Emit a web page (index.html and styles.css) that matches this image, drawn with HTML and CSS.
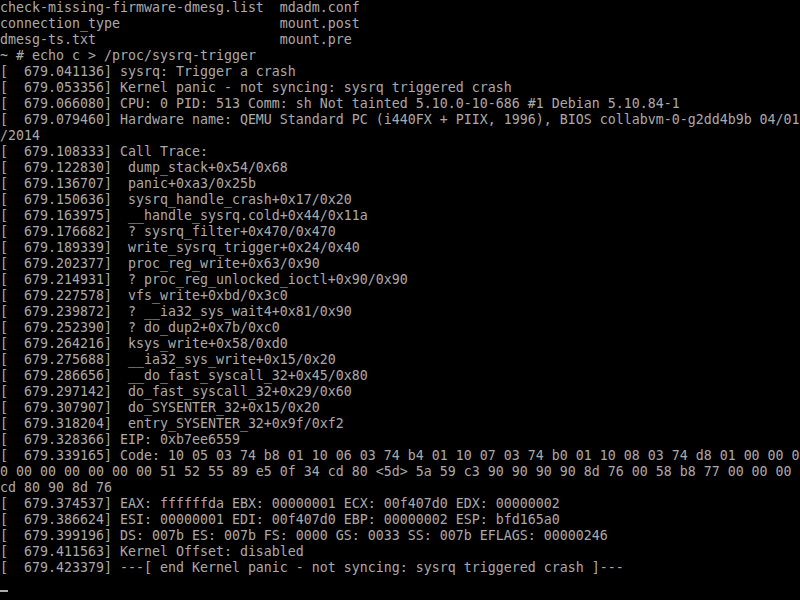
FILE: index.html
```html
<!DOCTYPE html>
<html>
<head>
<meta charset="utf-8">
<link rel="stylesheet" href="styles.css">
</head>
<body>
<pre class="console">check-missing-firmware-dmesg.list  mdadm.conf
connection_type                    mount.post
dmesg-ts.txt                       mount.pre
~ # echo c &gt; /proc/sysrq-trigger
[  679.041136] sysrq: Trigger a crash
[  679.053356] Kernel panic - not syncing: sysrq triggered crash
[  679.066080] CPU: 0 PID: 513 Comm: sh Not tainted 5.10.0-10-686 #1 Debian 5.10.84-1
[  679.079460] Hardware name: QEMU Standard PC (i440FX + PIIX, 1996), BIOS collabvm-0-g2dd4b9b 04/01
/2014
[  679.108333] Call Trace:
[  679.122830]  dump_stack+0x54/0x68
[  679.136707]  panic+0xa3/0x25b
[  679.150636]  sysrq_handle_crash+0x17/0x20
[  679.163975]  __handle_sysrq.cold+0x44/0x11a
[  679.176682]  ? sysrq_filter+0x470/0x470
[  679.189339]  write_sysrq_trigger+0x24/0x40
[  679.202377]  proc_reg_write+0x63/0x90
[  679.214931]  ? proc_reg_unlocked_ioctl+0x90/0x90
[  679.227578]  vfs_write+0xbd/0x3c0
[  679.239872]  ? __ia32_sys_wait4+0x81/0x90
[  679.252390]  ? do_dup2+0x7b/0xc0
[  679.264216]  ksys_write+0x58/0xd0
[  679.275688]  __ia32_sys_write+0x15/0x20
[  679.286656]  __do_fast_syscall_32+0x45/0x80
[  679.297142]  do_fast_syscall_32+0x29/0x60
[  679.307907]  do_SYSENTER_32+0x15/0x20
[  679.318204]  entry_SYSENTER_32+0x9f/0xf2
[  679.328366] EIP: 0xb7ee6559
[  679.339165] Code: 10 05 03 74 b8 01 10 06 03 74 b4 01 10 07 03 74 b0 01 10 08 03 74 d8 01 00 00 0
0 00 00 00 00 00 00 51 52 55 89 e5 0f 34 cd 80 &lt;5d&gt; 5a 59 c3 90 90 90 90 8d 76 00 58 b8 77 00 00 00
cd 80 90 8d 76
[  679.374537] EAX: ffffffda EBX: 00000001 ECX: 00f407d0 EDX: 00000002
[  679.386624] ESI: 00000001 EDI: 00f407d0 EBP: 00000002 ESP: bfd165a0
[  679.399196] DS: 007b ES: 007b FS: 0000 GS: 0033 SS: 007b EFLAGS: 00000246
[  679.411563] Kernel Offset: disabled
[  679.423379] ---[ end Kernel panic - not syncing: sysrq triggered crash ]---
<span class="cursor"></span></pre>
</body>
</html>
```

FILE: styles.css
```css
html, body {
  margin: 0;
  padding: 0;
  background: #000000;
  width: 800px;
  height: 600px;
  overflow: hidden;
}

.console {
  margin: 0;
  padding: 0;
  color: #aaaaaa;
  font-family: "DejaVu Sans Mono", monospace;
  font-size: 13.29px;
  line-height: 16px;
  white-space: pre;
}

.cursor {
  display: inline-block;
  width: 8px;
  height: 16px;
  vertical-align: top;
  box-shadow: inset 0 -2px 0 #aaaaaa;
}
```
